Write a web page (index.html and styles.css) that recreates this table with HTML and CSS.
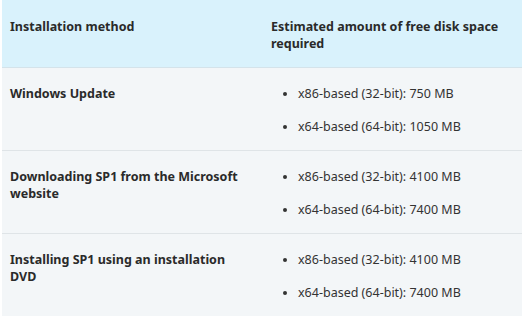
FILE: index.html
```html
<!DOCTYPE html>
<html>
<head>
<meta charset="utf-8">
<link rel="stylesheet" href="styles.css">
</head>
<body>
<table class="disk-table">
  <thead>
    <tr>
      <th class="col-method">Installation method</th>
      <th class="col-space">Estimated amount of free disk space required</th>
    </tr>
  </thead>
  <tbody>
    <tr>
      <td class="method">Windows Update</td>
      <td>
        <ul class="sizes">
          <li>x86-based (32-bit): 750 MB</li>
          <li>x64-based (64-bit): 1050 MB</li>
        </ul>
      </td>
    </tr>
    <tr>
      <td class="method">Downloading SP1 from the Microsoft website</td>
      <td>
        <ul class="sizes">
          <li>x86-based (32-bit): 4100 MB</li>
          <li>x64-based (64-bit): 7400 MB</li>
        </ul>
      </td>
    </tr>
    <tr>
      <td class="method">Installing SP1 using an installation DVD</td>
      <td>
        <ul class="sizes">
          <li>x86-based (32-bit): 4100 MB</li>
          <li>x64-based (64-bit): 7400 MB</li>
        </ul>
      </td>
    </tr>
  </tbody>
</table>
</body>
</html>
```

FILE: styles.css
```css
html, body {
  margin: 0;
  padding: 0;
  background: #ffffff;
}

body {
  font-family: "Noto Sans", "Open Sans", sans-serif;
  font-size: 12.5px;
  color: #2a2a2a;
}

.disk-table {
  margin-left: 2px;
  width: 520px;
  border-collapse: collapse;
  table-layout: fixed;
}

.disk-table th,
.disk-table td {
  text-align: left;
  vertical-align: top;
  padding: 17px 8px 15px 8px;
  line-height: 17px;
}

.disk-table th:first-child,
.disk-table td:first-child {
  padding-right: 16px;
}

.disk-table thead th {
  background: #d9f2fc;
  font-weight: 700;
  padding-top: 18px;
  border-bottom: 1px solid #d4e3ea;
}

.col-method {
  width: 237px;
}

.disk-table tbody td {
  background: #f3f6f8;
  border-bottom: 1px solid #dfe4e7;
}

.method {
  font-weight: 700;
}

.sizes {
  margin: 0;
  padding-left: 27px;
  color: #333333;
}

.sizes li + li {
  margin-top: 16px;
}
```
